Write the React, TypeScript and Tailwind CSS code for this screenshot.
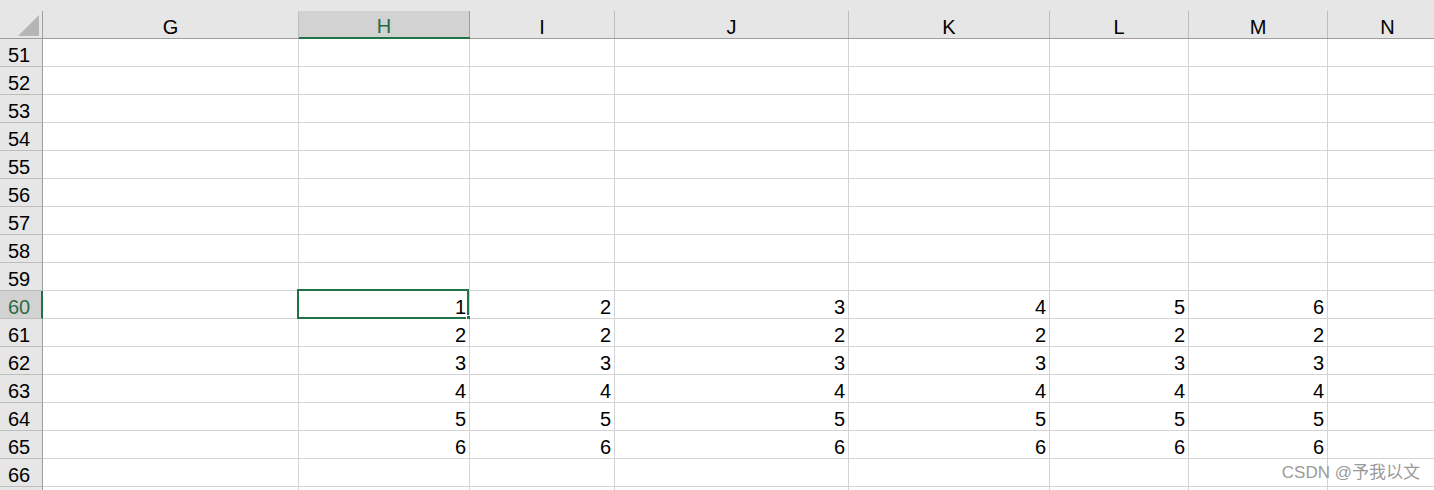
import React from 'react';

const cols = [
  { key: 'G', w: 'w-[256px]' },
  { key: 'H', w: 'w-[171px]' },
  { key: 'I', w: 'w-[145px]' },
  { key: 'J', w: 'w-[234px]' },
  { key: 'K', w: 'w-[201px]' },
  { key: 'L', w: 'w-[139px]' },
  { key: 'M', w: 'w-[139px]' },
  { key: 'N', w: 'w-[120px]' },
];

const rows = Array.from({ length: 17 }, (_, i) => 51 + i);

function cellValue(row: number, col: string): string {
  const idx = ['H', 'I', 'J', 'K', 'L', 'M'].indexOf(col);
  if (idx < 0) return '';
  if (row === 60) return String(idx + 1);
  if (row >= 61 && row <= 65) return String(row - 59);
  return '';
}

export default function App() {
  return (
    <div className="relative w-[1434px] h-[490px] overflow-hidden bg-white font-['Liberation_Sans',sans-serif] text-black">
      {/* column headers */}
      <div className="flex h-[39px] bg-[#e6e6e6]">
        <div className="w-[43px] shrink-0 flex flex-col">
          <div className="h-[11px]" />
          <div className="flex-1 border-r border-[#9e9e9e] flex items-end justify-end pr-[3px] pb-[2px]">
            <svg width="21" height="21" viewBox="0 0 21 21">
              <polygon points="21,0 21,21 0,21" fill="#b5b5b5" />
            </svg>
          </div>
          <div className="h-px bg-[#9e9e9e]" />
        </div>
        {cols.map((c) =>
          c.key === 'H' ? (
            <div key={c.key} className={`${c.w} shrink-0 flex flex-col`}>
              <div className="h-[11px]" />
              <div className="h-[26px] bg-[#d2d2d2] border-r border-[#9e9e9e] flex items-center justify-center text-[20px] text-[#1e6b42] pt-[3px]">
                {c.key}
              </div>
              <div className="h-[2px] bg-[#217346]" />
            </div>
          ) : (
            <div key={c.key} className={`${c.w} shrink-0 flex flex-col`}>
              <div className="h-[11px]" />
              <div className="h-[27px] border-r border-[#bdbdbd] flex items-center justify-center text-[20px] pt-[4px]">
                {c.key}
              </div>
              <div className="h-px bg-[#9e9e9e]" />
            </div>
          )
        )}
      </div>

      {/* body */}
      {rows.map((r) => (
        <div key={r} className="flex h-[28px]">
          <div
            className={
              r === 60
                ? 'w-[43px] shrink-0 bg-[#d2d2d2] border-r-2 border-r-[#217346] border-b border-b-[#bdbdbd] flex items-center pl-[8px] pt-[4px] text-[20px] text-[#2e6b45]'
                : 'w-[43px] shrink-0 bg-[#e6e6e6] border-r border-r-[#9e9e9e] border-b border-b-[#bdbdbd] flex items-center pl-[8px] pt-[4px] text-[20px]'
            }
          >
            {r < 67 ? r : ''}
          </div>
          {cols.map((c) => (
            <div
              key={c.key}
              className={`${c.w} shrink-0 relative border-r border-b border-[#d4d4d4] flex items-center justify-end pr-[3px] pt-[5px] text-[20px]`}
            >
              {cellValue(r, c.key)}
              {r === 60 && c.key === 'H' && (
                <>
                  <div className="absolute -left-[2px] -top-[2px] w-[172px] h-[30px] border-2 border-[#217346] pointer-events-none" />
                  <div className="absolute -right-[2px] -bottom-[2px] w-[5px] h-[5px] bg-[#217346] border border-white" />
                </>
              )}
            </div>
          ))}
        </div>
      ))}

      {/* watermark */}
      <div className="absolute right-[14px] top-[460px] text-[17px] text-[#9a9a9a] font-['Liberation_Sans','Noto_Sans_CJK_SC',sans-serif] pointer-events-none">
        CSDN @予我以文
      </div>
    </div>
  );
}
